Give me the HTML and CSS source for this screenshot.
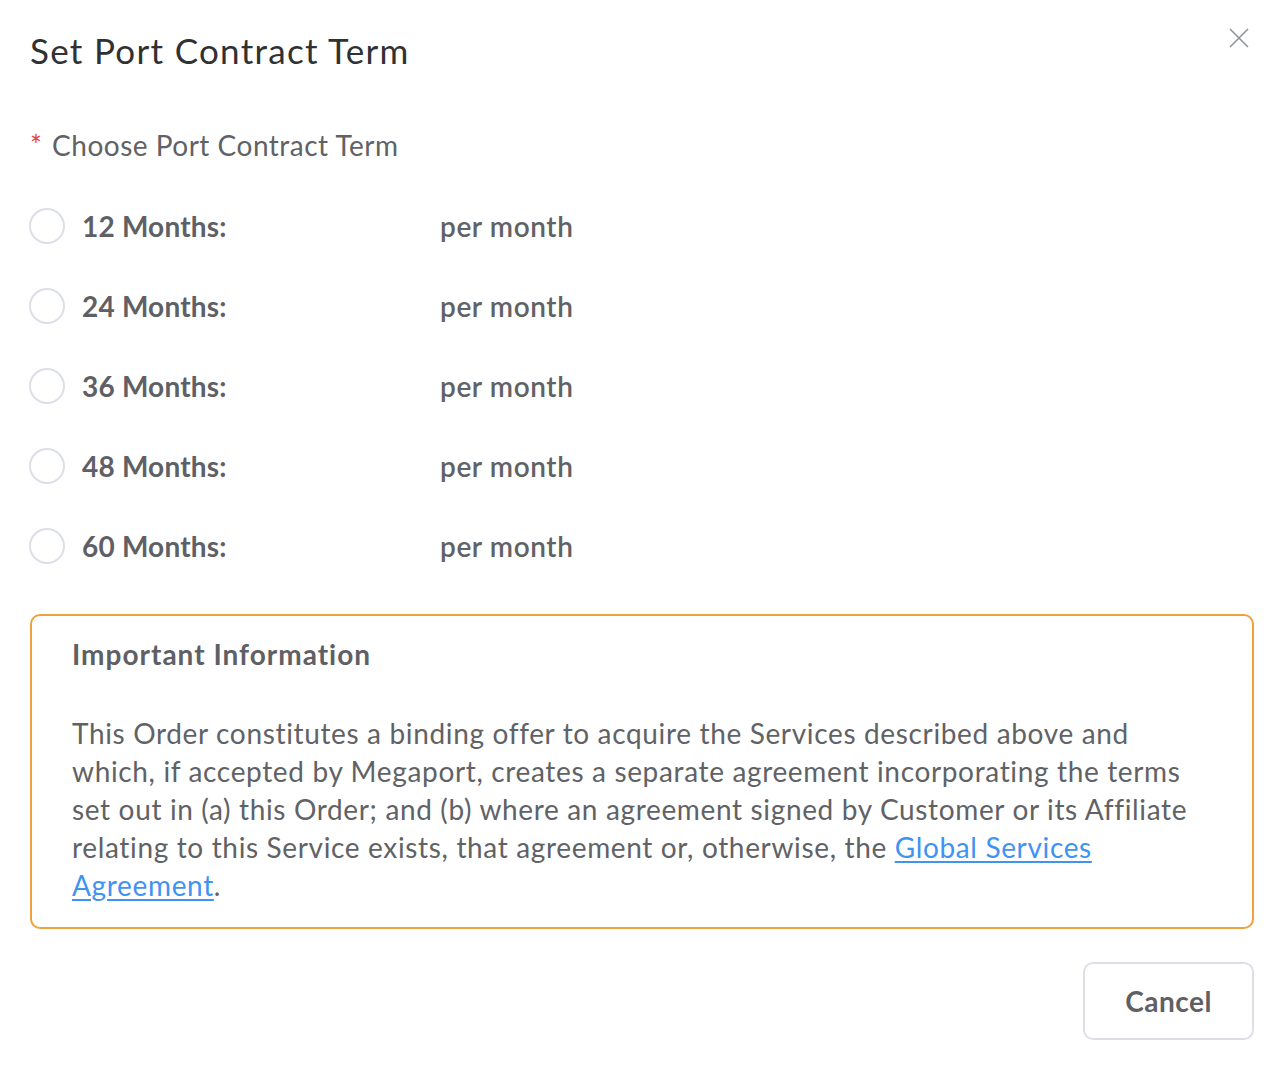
FILE: index.html
```html
<!DOCTYPE html>
<html lang="en">
<head>
<meta charset="utf-8">
<title>Set Port Contract Term</title>
<link rel="stylesheet" href="styles.css">
</head>
<body>
<div class="dialog">
  <div class="dialog-header">
    <h1 class="dialog-title">Set Port Contract Term</h1>
    <button class="close-btn" aria-label="Close">
      <svg width="20" height="20" viewBox="0 0 20 20"><path d="M1 1 L19 19 M19 1 L1 19" stroke="#909399" stroke-width="1.6" fill="none"/></svg>
    </button>
  </div>
  <div class="form-label"><span class="req">*</span> Choose Port Contract Term</div>
  <div class="options">
    <label class="option"><span class="radio"></span><span class="term">12 Months:</span><span class="price">per month</span></label>
    <label class="option"><span class="radio"></span><span class="term">24 Months:</span><span class="price">per month</span></label>
    <label class="option"><span class="radio"></span><span class="term">36 Months:</span><span class="price">per month</span></label>
    <label class="option"><span class="radio"></span><span class="term">48 Months:</span><span class="price">per month</span></label>
    <label class="option"><span class="radio"></span><span class="term">60 Months:</span><span class="price">per month</span></label>
  </div>
  <div class="info-box">
    <div class="info-title">Important Information</div>
    <p class="info-text">This Order constitutes a binding offer to acquire the Services described above and<br>which, if accepted by Megaport, creates a separate agreement incorporating the terms<br>set out in (a) this Order; and (b) where an agreement signed by Customer or its Affiliate<br>relating to this Service exists, that agreement or, otherwise, the <a href="#">Global Services<br>Agreement</a>.</p>
  </div>
  <div class="footer">
    <button class="btn">Cancel</button>
  </div>
</div>
</body>
</html>
```
FILE: styles.css
```css
html, body {
  margin: 0;
  padding: 0;
  background: #ffffff;
}
body {
  font-family: Lato, "Noto Sans", sans-serif;
  color: #606266;
}
.dialog {
  padding: 30px 24px 20px 30px;
}
.dialog-header {
  display: flex;
  justify-content: space-between;
  align-items: flex-start;
}
.dialog-title {
  margin: 0;
  font-size: 35px;
  line-height: 40px;
  font-weight: 400;
  color: #303133;
  letter-spacing: 1.3px;
}
.close-btn {
  border: 0;
  background: none;
  padding: 0;
  margin: -2px 5px 0 0;
  width: 20px;
  height: 20px;
  cursor: pointer;
}
.form-label {
  margin-top: 55px;
  font-size: 28px;
  line-height: 40px;
  color: #606266;
  letter-spacing: 0.5px;
}
.req {
  color: #e5453c;
  margin-right: 2px;
}
.options {
  margin-top: 21px;
  display: flex;
  flex-direction: column;
}
.option {
  height: 80px;
  display: flex;
  align-items: center;
  font-size: 28px;
}
.radio {
  width: 32px;
  height: 32px;
  border: 2px solid #dcdfe6;
  border-radius: 50%;
  box-sizing: content-box;
  margin-left: -1px;
  flex: none;
}
.term {
  margin-left: 17px;
  width: 358px;
  font-weight: 700;
  color: #5f6066;
  letter-spacing: 0.2px;
}
.price {
  color: #606266;
  font-weight: 600;
  letter-spacing: 0.6px;
}
.info-box {
  margin-top: 28px;
  border: 2px solid #eea23e;
  border-radius: 10px;
  padding: 18px 40px 23px 40px;
}
.info-title {
  font-size: 28px;
  line-height: 40px;
  font-weight: 700;
  color: #5f6066;
  letter-spacing: 1px;
}
.info-text {
  margin: 40px 0 0 0;
  font-size: 28px;
  line-height: 38px;
  color: #606266;
  letter-spacing: 0.65px;
}
.info-text a {
  color: #3f93f2;
  text-decoration: underline;
  text-underline-offset: 3px;
}
.footer {
  margin-top: 33px;
  display: flex;
  justify-content: flex-end;
}
.btn {
  width: 171px;
  height: 78px;
  border: 2px solid #dcdfe6;
  border-radius: 10px;
  background: #fff;
  font-family: Lato, "Noto Sans", sans-serif;
  font-size: 28px;
  font-weight: 700;
  color: #5f6066;
  letter-spacing: 0.5px;
  cursor: pointer;
}
```
